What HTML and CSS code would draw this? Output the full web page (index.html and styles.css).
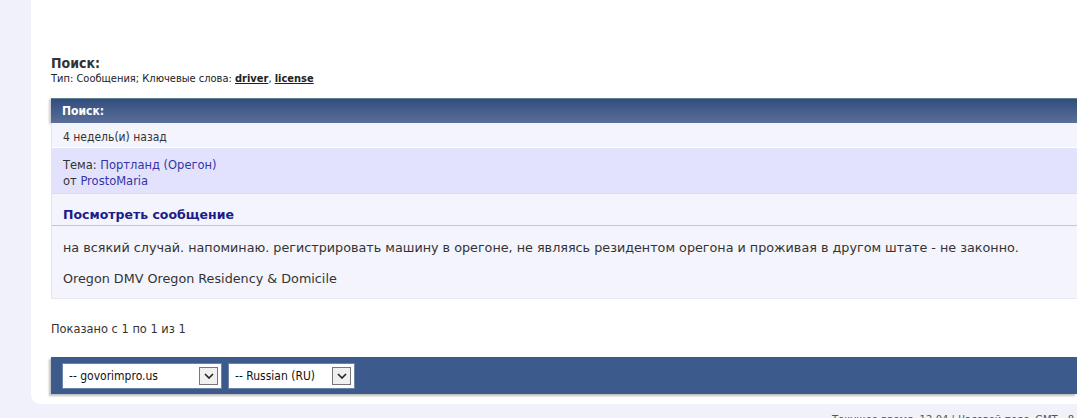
FILE: index.html
```html
<!DOCTYPE html>
<html lang="ru">
<head>
<meta charset="utf-8">
<title>Поиск</title>
<link rel="stylesheet" href="styles.css">
</head>
<body>
<div class="page">
  <h2 class="title">Поиск:</h2>
  <div class="subtitle">Тип: Сообщения; Ключевые слова: <a class="kw" href="#">driver</a>, <a class="kw" href="#">license</a></div>

  <div class="forum">
    <div class="forum-head">Поиск:</div>
    <div class="row row-date">4 недель(и) назад</div>
    <div class="row row-topic">
      <div>Тема: <a class="link" href="#">Портланд (Орегон)</a></div>
      <div>от <a class="link" href="#">ProstoMaria</a></div>
    </div>
    <div class="row row-view"><a class="view" href="#">Посмотреть сообщение</a></div>
    <div class="row row-body">
      <p>на всякий случай. напоминаю. регистрировать машину в орегоне, не являясь резидентом орегона и проживая в другом штате - не законно.</p>
      <p>Oregon DMV Oregon Residency &amp; Domicile</p>
    </div>
  </div>

  <div class="shown">Показано с 1 по 1 из 1</div>

  <div class="bar">
    <div class="sel sel-site"><span>-- govorimpro.us</span><span class="arrow"><svg width="10" height="6" viewBox="0 0 10 6"><path d="M1 1 L5 5 L9 1" fill="none" stroke="#222" stroke-width="1.6"/></svg></span></div>
    <div class="sel sel-lang"><span>-- Russian (RU)</span><span class="arrow"><svg width="10" height="6" viewBox="0 0 10 6"><path d="M1 1 L5 5 L9 1" fill="none" stroke="#222" stroke-width="1.6"/></svg></span></div>
  </div>
</div>
<div class="foot">Текущее время: 12:04 | Часовой пояс: GMT - 8</div>
</body>
</html>
```
FILE: styles.css
```css
html, body {
  margin: 0;
  padding: 0;
}
body {
  background: #f1f1fc;
  font-family: "DejaVu Sans", Verdana, sans-serif;
  color: #333;
  overflow: hidden;
}
.page {
  margin-left: 31px;
  background: #fff;
  border-bottom-left-radius: 9px;
  padding: 54px 0 10px 20px;
}
.title {
  margin: 0;
  font-size: 14px;
  line-height: 18px;
  font-weight: bold;
  color: #333;
  font-family: "DejaVu Sans Condensed", "DejaVu Sans", sans-serif;
}
.subtitle {
  font-size: 11px;
  line-height: 13px;
  font-family: "DejaVu Sans Condensed", "DejaVu Sans", sans-serif;
  color: #222;
}
.kw {
  color: #222;
  font-weight: bold;
  text-decoration: underline;
}
.forum {
  margin-top: 13px;
}
.forum-head {
  height: 24px;
  line-height: 24px;
  border-top: 1px solid #5d8191;
  background: linear-gradient(#324d7d, #5a6f99);
  color: #fff;
  font-weight: bold;
  font-size: 12px;
  padding-left: 11px;
  font-family: "DejaVu Sans Condensed", "DejaVu Sans", sans-serif;
  box-shadow: -2px 1px 2px rgba(0,0,0,0.2);
}
.row {
  padding-left: 11px;
  font-size: 12px;
  border-left: 1px solid #e4e4ee;
}
.row-date {
  background: #f4f4fd;
  height: 24px;
  line-height: 28px;
  border-bottom: 1px solid #fff;
  font-family: "DejaVu Sans Condensed", "DejaVu Sans", sans-serif;
}
.row-topic {
  background: #e2e2fd;
  padding-top: 9px;
  padding-bottom: 4px;
  line-height: 16px;
  font-size: 11.5px;
  border-bottom: 1px solid #dcdce6;
}
.link {
  color: #3434a6;
  text-decoration: none;
}
.row-view {
  background: #f4f4fd;
  height: 31px;
  line-height: 41px;
  border-bottom: 1px solid #c8c8cc;
}
.view {
  color: #1c1c8a;
  font-weight: bold;
  font-size: 12.5px;
  text-decoration: none;
}
.row-body {
  background: #f4f4fd;
  padding-top: 14px;
  padding-bottom: 11px;
  border-bottom: 1px solid #e8e8ee;
  font-size: 12.75px;
}
.row-body p {
  margin: 0;
  line-height: 16px;
}
.row-body p + p {
  margin-top: 15px;
}
.shown {
  margin-top: 22px;
  font-size: 12.7px;
  line-height: 16px;
  font-family: "DejaVu Sans Condensed", "DejaVu Sans", sans-serif;
}
.bar {
  margin-top: 20px;
  height: 37px;
  background: #3d5a8c;
  display: flex;
  align-items: center;
  gap: 6px;
  padding-left: 11px;
  box-shadow: -2px 2px 2px rgba(0,0,0,0.25);
}
.sel {
  height: 24px;
  background: #fff;
  border: 1px solid #6c84aa;
  display: flex;
  align-items: center;
  justify-content: space-between;
  padding: 0 3px 0 6px;
  font-size: 12px;
  font-family: "DejaVu Sans Condensed", "DejaVu Sans", sans-serif;
  color: #111;
}
.sel-site { width: 149px; }
.sel-lang { width: 116px; }
.arrow {
  width: 17px;
  height: 16px;
  background: #f0f0f0;
  border: 1px solid #777;
  display: flex;
  align-items: center;
  justify-content: center;
}
.foot {
  text-align: right;
  font-size: 10px;
  color: #555;
  padding: 10px 3px 0 0;
  white-space: nowrap;
}
```
